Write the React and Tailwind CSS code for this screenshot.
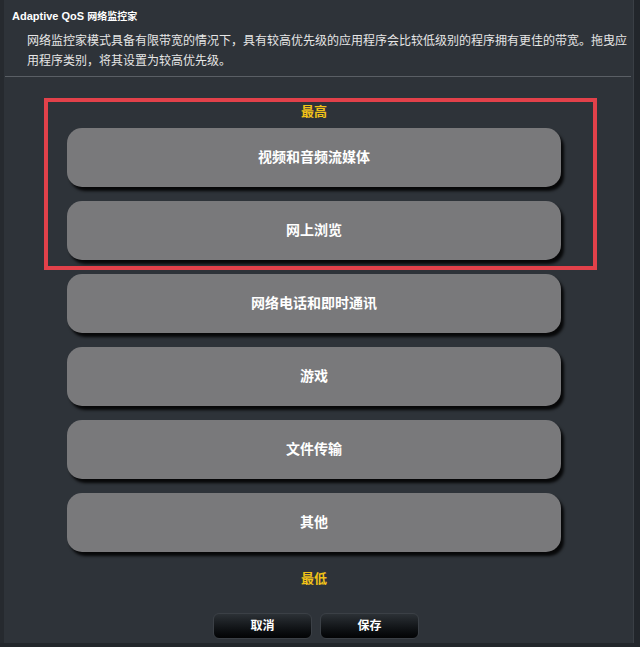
import React from "react";

const categories = [
  "视频和音频流媒体",
  "网上浏览",
  "网络电话和即时通讯",
  "游戏",
  "文件传输",
  "其他",
];

const cjk = { fontFamily: '"Liberation Sans", "Noto Sans CJK SC", sans-serif' };

export default function App() {
  return (
    <div className="w-[640px] h-[647px] bg-[#22262b] text-white" style={cjk}>
      <div className="relative w-[634px] h-[643px] bg-[#2e3339] border-l-4 border-[#262a2f] border-r border-r-[#3a3f45]">
        {/* header */}
        <div className="pt-[9px] pl-[8px] text-[11px] font-bold leading-[15px]">
          Adaptive QoS <span className="text-[10px]">网络监控家</span>
        </div>
        <p className="mt-[7px] pl-[23px] pr-[2px] text-[12px] leading-[20px] text-[#e6e6e6]">
          网络监控家模式具备有限带宽的情况下，具有较高优先级的应用程序会比较低级别的程序拥有更佳的带宽。拖曳应用程序类别，将其设置为较高优先级。
        </p>
        <div className="mt-[5px] h-px bg-[#5a5f65] mr-[2px] ml-[1px]" />

        {/* priority list */}
        <div className="flex flex-col items-center pl-[63px] pr-[72px] pt-[25px]">
          <div className="text-[13px] font-bold text-[#f2c318] leading-[20px]">最高</div>
          <div className="mt-[6px] w-full flex flex-col gap-[14px]">
            {categories.map((name) => (
              <div
                key={name}
                className="h-[59px] w-full rounded-[15px] bg-[#79797b] flex items-center justify-center text-[14px] font-bold shadow-[3px_4px_3px_rgba(0,0,0,0.85)]"
              >
                {name}
              </div>
            ))}
          </div>
          <div className="mt-[17px] text-[13px] font-bold text-[#f2c318] leading-[20px]">最低</div>
          <div className="mt-[24px] flex gap-[8px] pl-[4px]">
            <button className="w-[99px] h-[26px] rounded-[6px] border border-[#3b4046] bg-gradient-to-b from-[#2c3136] to-[#030405] text-[12px] font-bold text-white">
              取消
            </button>
            <button className="w-[99px] h-[26px] rounded-[6px] border border-[#3b4046] bg-gradient-to-b from-[#2c3136] to-[#030405] text-[12px] font-bold text-white">
              保存
            </button>
          </div>
        </div>

        {/* highlight annotation */}
        <div className="absolute left-[40px] top-[98px] w-[553px] h-[172px] border-4 border-[#e2414a] pointer-events-none" />
      </div>
    </div>
  );
}
